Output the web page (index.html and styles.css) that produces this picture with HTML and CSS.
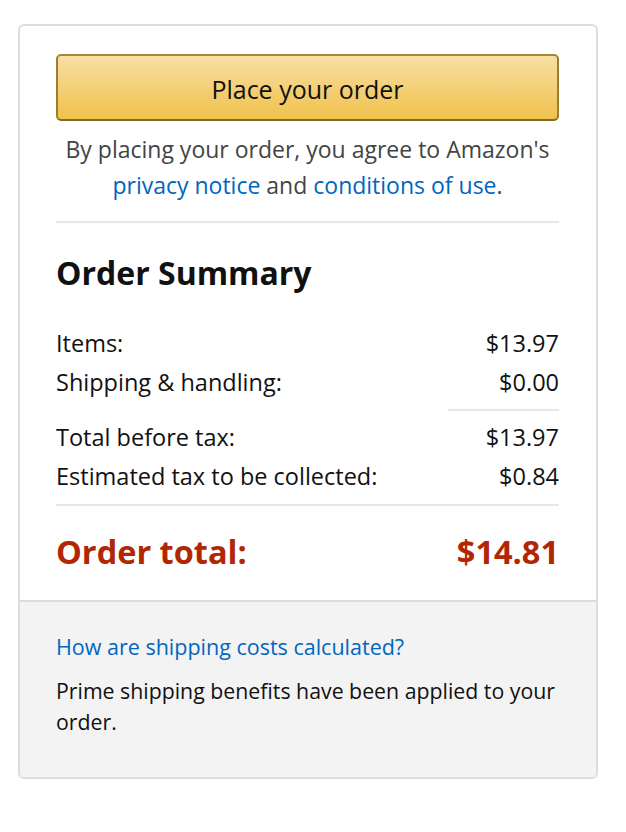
FILE: index.html
```html
<!DOCTYPE html>
<html>
<head>
<meta charset="utf-8">
<link rel="stylesheet" href="styles.css">
</head>
<body>
<div class="card">
  <div class="main">
    <button class="place-btn">Place your order</button>
    <p class="agree">By placing your order, you agree to Amazon's<br><a href="#">privacy notice</a> and <a href="#">conditions of use</a>.</p>
    <hr class="divider">
    <h2 class="title">Order Summary</h2>
    <div class="rows">
      <div class="row"><span>Items:</span><span>$13.97</span></div>
      <div class="row"><span>Shipping &amp; handling:</span><span>$0.00</span></div>
      <hr class="divider short">
      <div class="row"><span>Total before tax:</span><span>$13.97</span></div>
      <div class="row"><span>Estimated tax to be collected:</span><span>$0.84</span></div>
      <hr class="divider full">
      <div class="row total"><span>Order total:</span><span>$14.81</span></div>
    </div>
  </div>
  <div class="foot">
    <a href="#" class="foot-link">How are shipping costs calculated?</a>
    <p class="foot-text">Prime shipping benefits have been applied to your order.</p>
  </div>
</div>
</body>
</html>
```
FILE: styles.css
```css
* { box-sizing: border-box; }
body {
  margin: 0;
  background: #fff;
  font-family: "Open Sans", "Liberation Sans", sans-serif;
  color: #111;
}
.card {
  margin: 24px 0 0 18px;
  width: 580px;
  border: 2px solid #ddd;
  border-radius: 6px;
  overflow: hidden;
}
.main {
  padding: 28px 37px 0 36px;
}
.place-btn {
  display: block;
  width: 100%;
  height: 67px;
  border: 2px solid #a88734;
  border-color: #a88734 #9c7e31 #846a29;
  border-radius: 5px;
  background: linear-gradient(to bottom, #f7dfa5, #f0c14b);
  font-family: inherit;
  font-size: 25px;
  color: #111;
  padding: 2px 0 0;
}
.agree {
  margin: 10px 0 0;
  text-align: center;
  font-size: 23px;
  line-height: 36px;
  color: #444;
}
.agree a { color: #0066c0; text-decoration: none; }
.divider {
  border: 0;
  height: 2px;
  background: #e7e7e7;
  margin: 18px 0 0;
}
.title {
  margin: 30px 0 0;
  font-size: 32px;
  line-height: 40px;
  font-weight: 700;
}
.rows { margin-top: 31px; }
.row {
  display: flex;
  justify-content: space-between;
  font-size: 23.5px;
  line-height: 39px;
}
.divider.short {
  width: 111px;
  margin: 7px 0 7px auto;
}
.divider.full { margin: 8px 0 10px; }
.row.total {
  font-size: 32.5px;
  font-weight: 700;
  color: #b12704;
  line-height: 72px;
}
.foot {
  margin-top: 12px;
  border-top: 2px solid #ddd;
  background: #f3f3f3;
  padding: 29px 28px 40px 36px;
}
.foot-link {
  display: block;
  color: #0066c0;
  text-decoration: none;
  font-size: 21.5px;
  line-height: 32px;
}
.foot-text {
  margin: 12px 0 0;
  font-size: 21.3px;
  line-height: 31px;
}
```
